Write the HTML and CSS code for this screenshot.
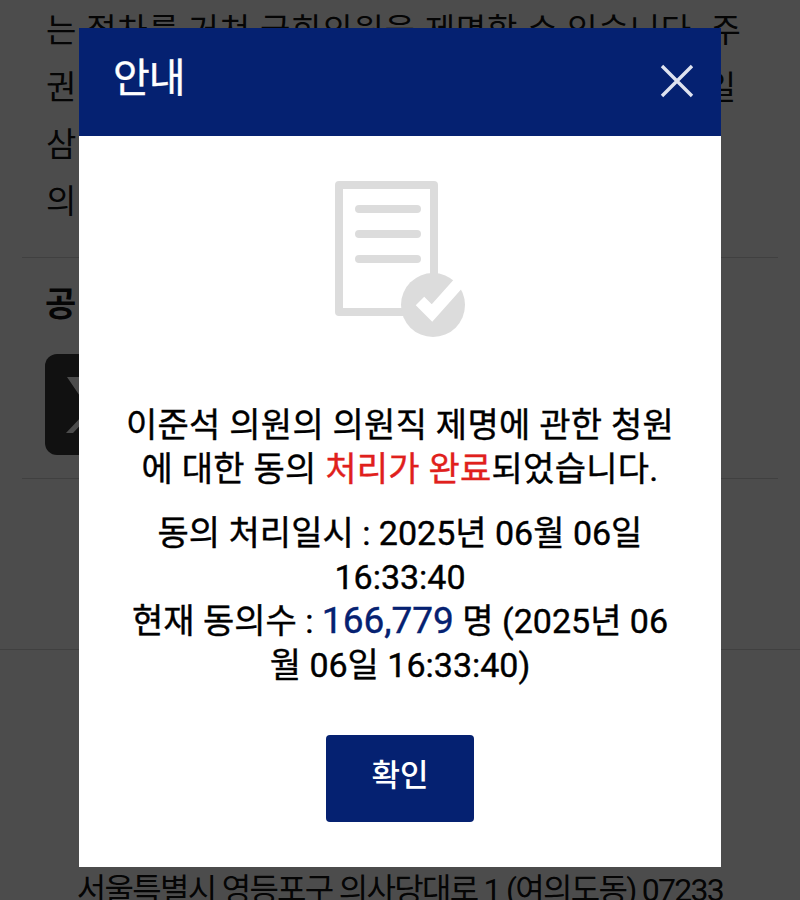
FILE: index.html
```html
<!DOCTYPE html>
<html lang="ko">
<head>
<meta charset="utf-8">
<title>안내</title>
<link rel="stylesheet" href="styles.css">
</head>
<body>
<div class="page">
  <section class="article">
    <div class="para">
      <p class="line">는 절차를 거쳐 국회의원을 제명할 수 있습니다. 주</p>
      <p class="line split"><span>권</span><span>일</span></p>
      <p class="line">삼</p>
      <p class="line">의</p>
    </div>
    <div class="share">
      <h2 class="share-title">공</h2>
      <div class="share-icon">
        <svg class="x-logo" viewBox="0 0 100 100" aria-hidden="true"><path d="M22 22h18l38 56H60zM74 22h7L28 78h-7z" fill="#fff"/></svg>
      </div>
    </div>
  </section>
  <footer class="footer">서울특별시 영등포구 의사당대로 1 (여의도동) 07233</footer>

  <div class="overlay">
    <div class="modal">
      <header class="modal-head">
        <h1 class="modal-title">안내</h1>
        <svg class="close" viewBox="0 0 34 34" aria-hidden="true"><path d="M2 2l30 30M32 2L2 32" fill="none" stroke="#dfe3f0" stroke-width="3.4"/></svg>
      </header>
      <div class="modal-body">
        <svg class="doc" viewBox="0 0 130 158" aria-hidden="true">
          <path d="M4 4h95v127H4z" fill="none" stroke="#dcdcdc" stroke-width="8" stroke-linejoin="round"/>
          <path d="M24 28h58M24 53h58M24 78h58" fill="none" stroke="#dcdcdc" stroke-width="8" stroke-linecap="round"/>
          <circle cx="98" cy="124" r="32" fill="#dcdcdc"/>
          <path d="M85 120l12 12 33-37" fill="none" stroke="#fff" stroke-width="12"/>
        </svg>
        <p class="msg">이준석 의원의 의원직 제명에 관한 청원에 대한 동의 <em class="done">처리가 완료</em>되었습니다.</p>
        <p class="meta">동의 처리일시 : 2025년 06월 06일 16:33:40<br>현재 동의수 : <strong class="count">166,779</strong> 명 (2025년 06월 06일 16:33:40)</p>
        <button class="ok" type="button">확인</button>
      </div>
    </div>
  </div>
</div>
</body>
</html>
```

FILE: styles.css
```css
* { box-sizing: border-box; }
html, body { margin: 0; padding: 0; }
body { font-family: Roboto, "Noto Sans CJK KR", sans-serif; color: #111; background: #fff; }
.page { position: relative; width: 800px; height: 900px; overflow: hidden; }
.article { margin: 0 22px; }
.para { padding: 2px 24px 27px; border-bottom: 1px solid #d8d8d8; }
.line { margin: 0; height: 57px; font-size: 33px; line-height: 57px; white-space: nowrap; letter-spacing: 0.8px; }
.split { display: flex; justify-content: space-between; padding-right: 17px; }
.share { padding: 24px 23px 23px; border-bottom: 1px solid #d8d8d8; }
.share-title { margin: 0 0 28px; font-size: 34px; line-height: 44px; font-weight: 700; }
.share-icon { width: 100px; height: 101px; border-radius: 12px; background: #3a3a3a; display: flex; align-items: center; justify-content: center; }
.x-logo { width: 100px; height: 100px; }
.footer { margin-top: 170px; padding-top: 218px; border-top: 1px solid #d8d8d8; text-align: center; font-size: 32px; line-height: 44px; letter-spacing: -1.72px; color: #111; }
.overlay { position: absolute; inset: 0; background: rgba(0, 0, 0, 0.7); padding-top: 28px; }
.modal { width: 642px; height: 839px; margin: 0 auto; background: #fff; display: flex; flex-direction: column; }
.modal-head { height: 108px; flex: none; background: #052171; display: flex; align-items: center; justify-content: space-between; padding: 0 27px 6px 34px; }
.modal-title { margin: 0; font-size: 40px; line-height: 50px; font-weight: 400; -webkit-text-stroke: 0.4px #fff; color: #fff; letter-spacing: -1px; }
.close { width: 34px; height: 34px; margin-top: 4px; }
.modal-body { flex: 1; display: flex; flex-direction: column; align-items: center; padding: 45px 46px 45px; text-align: center; }
.doc { width: 130px; height: 158px; flex: none; }
.msg { margin: 64px 0 0; font-size: 34px; font-weight: 400; -webkit-text-stroke: 0.4px; line-height: 44px; letter-spacing: 0.25px; color: #000; }
.done { font-style: normal; color: #e0201c; }
.meta { margin: 20px 0 0; font-size: 34px; font-weight: 400; -webkit-text-stroke: 0.4px; line-height: 44px; letter-spacing: 0; color: #000; }
.count { font-size: 37px; font-weight: 400; line-height: 1; color: #052171; }
.ok { margin-top: 48px; width: 148px; height: 87px; padding: 0 0 12px; border: 0; border-radius: 4px; background: #052171; color: #fff; font-family: inherit; font-size: 31px; font-weight: 500; }
```
